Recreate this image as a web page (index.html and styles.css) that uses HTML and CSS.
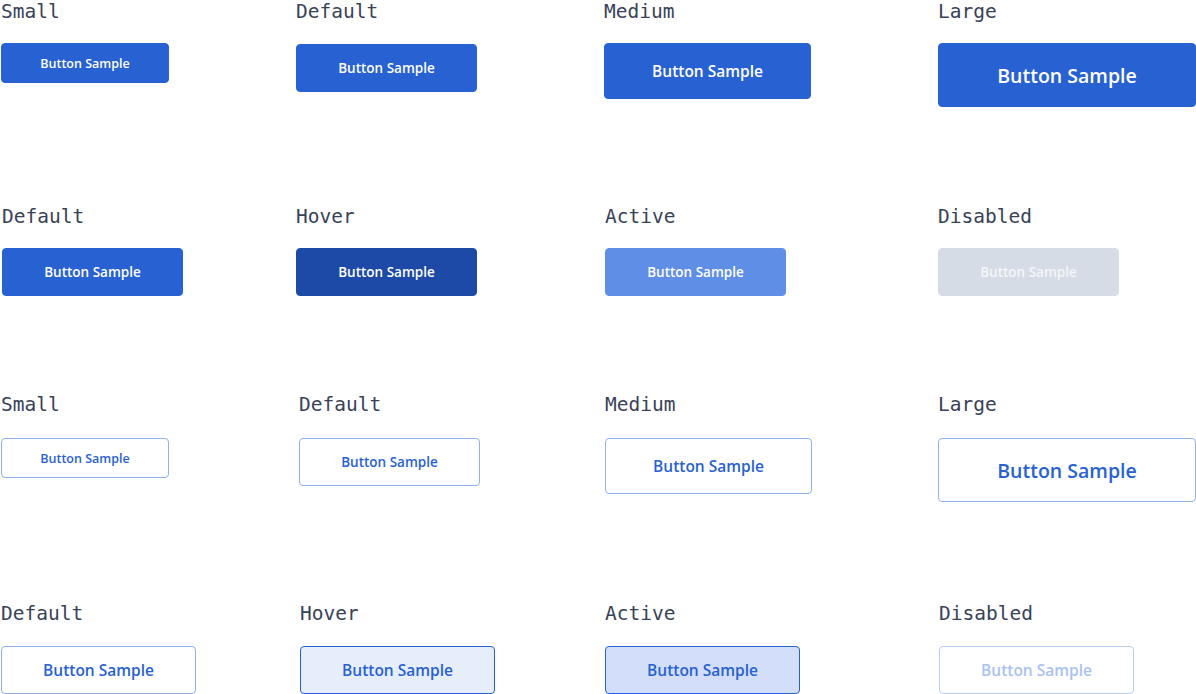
FILE: index.html
```html
<!DOCTYPE html>
<html lang="en">
<head>
  <meta charset="UTF-8">
  <meta name="viewport" content="width=device-width, initial-scale=1.0">
  <title>Button Samples</title>
  <link rel="stylesheet" href="styles.css">
</head>
<body>
  <div class="board">

    <!-- filled sizes -->
    <section class="row row-sizes">
      <div class="cell">
        <h3 class="label">Small</h3>
        <button class="btn btn-solid btn-sm">Button Sample</button>
      </div>
      <div class="cell">
        <h3 class="label">Default</h3>
        <button class="btn btn-solid btn-md drop-1">Button Sample</button>
      </div>
      <div class="cell">
        <h3 class="label">Medium</h3>
        <button class="btn btn-solid btn-lg">Button Sample</button>
      </div>
      <div class="cell">
        <h3 class="label">Large</h3>
        <button class="btn btn-solid btn-xl">Button Sample</button>
      </div>
    </section>

    <!-- filled states -->
    <section class="row row-states">
      <div class="cell nudge-2">
        <h3 class="label">Default</h3>
        <button class="btn btn-solid btn-md">Button Sample</button>
      </div>
      <div class="cell">
        <h3 class="label">Hover</h3>
        <button class="btn btn-solid btn-md is-hover">Button Sample</button>
      </div>
      <div class="cell nudge-1">
        <h3 class="label">Active</h3>
        <button class="btn btn-solid btn-md is-active">Button Sample</button>
      </div>
      <div class="cell">
        <h3 class="label">Disabled</h3>
        <button class="btn btn-solid btn-md" disabled>Button Sample</button>
      </div>
    </section>

    <!-- outline sizes -->
    <section class="row row-outline">
      <div class="cell nudge-1">
        <h3 class="label">Small</h3>
        <button class="btn btn-outline btn-sm">Button Sample</button>
      </div>
      <div class="cell nudge-3">
        <h3 class="label">Default</h3>
        <button class="btn btn-outline btn-md">Button Sample</button>
      </div>
      <div class="cell nudge-1">
        <h3 class="label">Medium</h3>
        <button class="btn btn-outline btn-lg">Button Sample</button>
      </div>
      <div class="cell">
        <h3 class="label">Large</h3>
        <button class="btn btn-outline btn-xl">Button Sample</button>
      </div>
    </section>

    <!-- outline states -->
    <section class="row row-outline-states">
      <div class="cell nudge-1">
        <h3 class="label">Default</h3>
        <button class="btn btn-outline btn-wide">Button Sample</button>
      </div>
      <div class="cell nudge-4">
        <h3 class="label">Hover</h3>
        <button class="btn btn-outline btn-wide is-hover">Button Sample</button>
      </div>
      <div class="cell nudge-1">
        <h3 class="label">Active</h3>
        <button class="btn btn-outline btn-wide is-active">Button Sample</button>
      </div>
      <div class="cell nudge-1">
        <h3 class="label">Disabled</h3>
        <button class="btn btn-outline btn-wide" disabled>Button Sample</button>
      </div>
    </section>

  </div>
</body>
</html>
```

FILE: styles.css
```css
* {
  margin: 0;
  padding: 0;
  box-sizing: border-box;
}

body {
  background: #ffffff;
  font-family: "Open Sans", Arial, sans-serif;
  overflow: hidden;
}

/* columns start at 0 / 296 / 604 / 938 */
.row {
  display: grid;
  grid-template-columns: 296px 308px 334px 258px;
  align-items: start;
}

.row-sizes { height: 205px; }
.row-states { height: 188px; }
.row-outline { height: 209px; }
.row-outline-states { height: 92px; }

.cell {
  display: flex;
  flex-direction: column;
  align-items: flex-start;
  gap: 19px;
  padding-left: 0;
}

.row-outline .cell {
  gap: 21px;
}

.row-outline-states .cell {
  gap: 20px;
}

.row-sizes .cell:first-child { padding-left: 1px; }

.nudge-1 { padding-left: 1px; }
.nudge-2 { padding-left: 2px; }
.nudge-3 { padding-left: 3px; }
.nudge-4 { padding-left: 4px; }
.drop-1 { margin-top: 1px; }

.label {
  font-family: "DejaVu Sans Mono", "Liberation Mono", monospace;
  font-size: 19.5px;
  line-height: 24px;
  font-weight: normal;
  color: #384257;
}

.btn {
  font-family: "Open Sans", Arial, sans-serif;
  font-weight: 600;
  border-radius: 4px;
  border: 1px solid transparent;
  cursor: pointer;
}

.btn-sm { width: 168px; height: 40px; font-size: 12.5px; }
.btn-md { width: 181px; height: 48px; font-size: 13.5px; }
.btn-lg { width: 207px; height: 56px; font-size: 15.5px; }
.btn-xl { width: 258px; height: 64px; font-size: 19.5px; }
.btn-wide { width: 195px; height: 48px; font-size: 15.5px; }

.btn-solid {
  background: #2761d2;
  border-color: #2761d2;
  color: #ffffff;
}

.btn-solid.is-hover {
  background: #1c4aa6;
  border-color: #1c4aa6;
}

.btn-solid.is-active {
  background: #5f8ee6;
  border-color: #5f8ee6;
}

.btn-solid:disabled {
  background: #d6dce5;
  border-color: #d6dce5;
  color: #f4f6f9;
}

.btn-outline {
  background: #ffffff;
  border-color: #91b0ec;
  color: #2761d2;
}

.btn-outline.is-hover {
  background: #e7eefb;
  border-color: #2761d2;
}

.btn-outline.is-active {
  background: #d3defa;
  border-color: #2761d2;
}

.btn-outline:disabled {
  background: #ffffff;
  border-color: #b9cdf3;
  color: #a9c2f1;
}
```
